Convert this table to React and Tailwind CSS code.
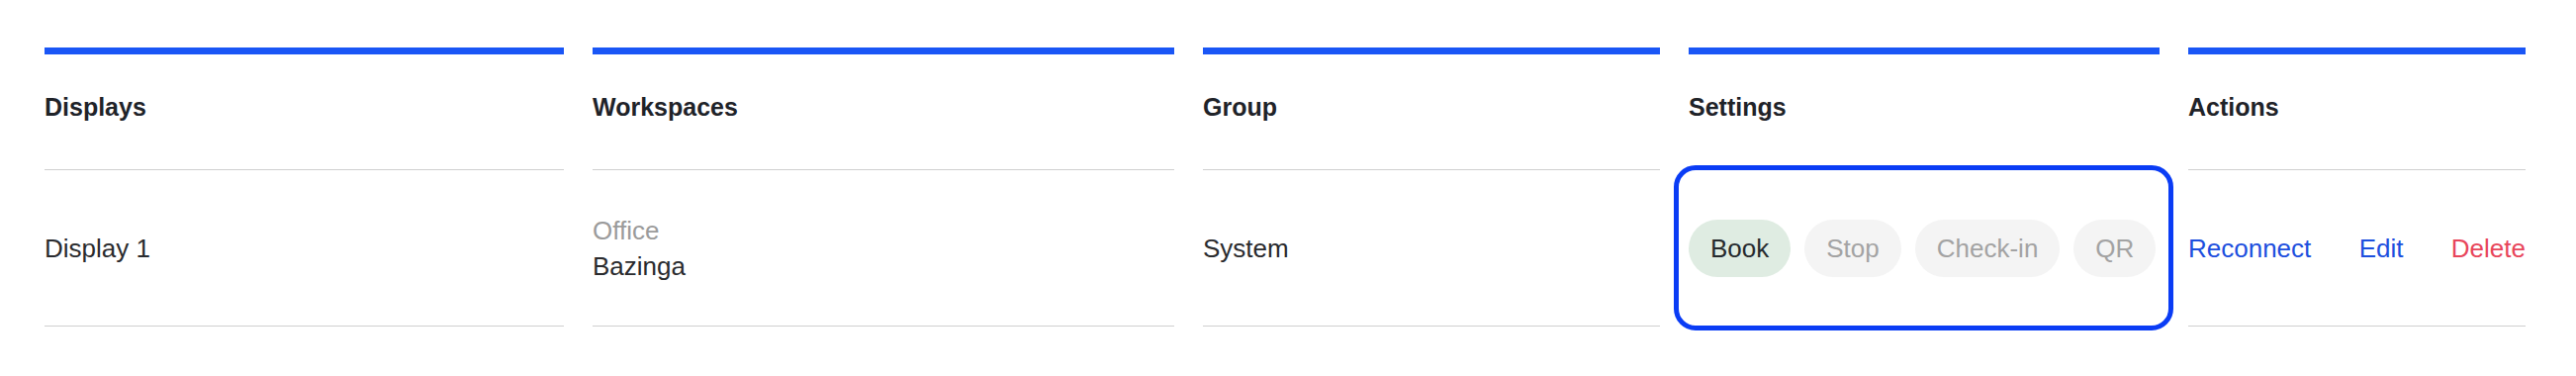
import React from "react";

const font = { fontFamily: '"Liberation Sans", Arial, sans-serif' };

function Header({ children }) {
  return (
    <div className="h-[117px] pt-[41px] border-b border-[#d0d0d0] text-[25px] leading-[25px] font-bold text-[#1f2329]">
      {children}
    </div>
  );
}

function Col({ className, children }) {
  return (
    <div className={className}>
      <div className="h-[7px] bg-[#1a56f6]" />
      {children}
    </div>
  );
}

function Cell({ children, className = "" }) {
  return (
    <div className={"relative h-[158px] border-b border-[#d0d0d0] flex items-center text-[26px] leading-[26px] text-[#2a2b2e] " + className}>
      {children}
    </div>
  );
}

function Pill({ children, active }) {
  return (
    <div
      className={
        "h-[58px] px-[22px] rounded-full flex items-center text-[26px] " +
        (active ? "bg-[#dfece2] text-[#262a2e]" : "bg-[#f4f4f4] text-[#a3a3a3]")
      }
    >
      {children}
    </div>
  );
}

export default function App() {
  return (
    <div className="w-[2604px] h-[380px] bg-white pt-[48px] px-[45px]" style={font}>
      <div className="flex gap-[29px]">
        <Col className="w-[525px]">
          <Header>Displays</Header>
          <Cell>Display 1</Cell>
        </Col>
        <Col className="w-[588px]">
          <Header>Workspaces</Header>
          <Cell>
            <div className="flex flex-col leading-[36px]">
              <span className="text-[#9b9b9b]">Office</span>
              <span>Bazinga</span>
            </div>
          </Cell>
        </Col>
        <Col className="w-[462px]">
          <Header>Group</Header>
          <Cell>System</Cell>
        </Col>
        <Col className="w-[476px]">
          <Header>Settings</Header>
          <Cell>
            <div className="flex gap-[14px]">
              <Pill active>Book</Pill>
              <Pill>Stop</Pill>
              <Pill>Check-in</Pill>
              <Pill>QR</Pill>
            </div>
            <div className="absolute -top-[5px] -bottom-[5px] -left-[15px] -right-[14px] border-[5px] border-[#0a3cf5] rounded-[22px] pointer-events-none" />
          </Cell>
        </Col>
        <Col className="w-[341px]">
          <Header>Actions</Header>
          <Cell className="justify-between">
            <span className="text-[#1d4fde]">Reconnect</span>
            <span className="text-[#1d4fde]">Edit</span>
            <span className="text-[#e8465b]">Delete</span>
          </Cell>
        </Col>
      </div>
    </div>
  );
}
